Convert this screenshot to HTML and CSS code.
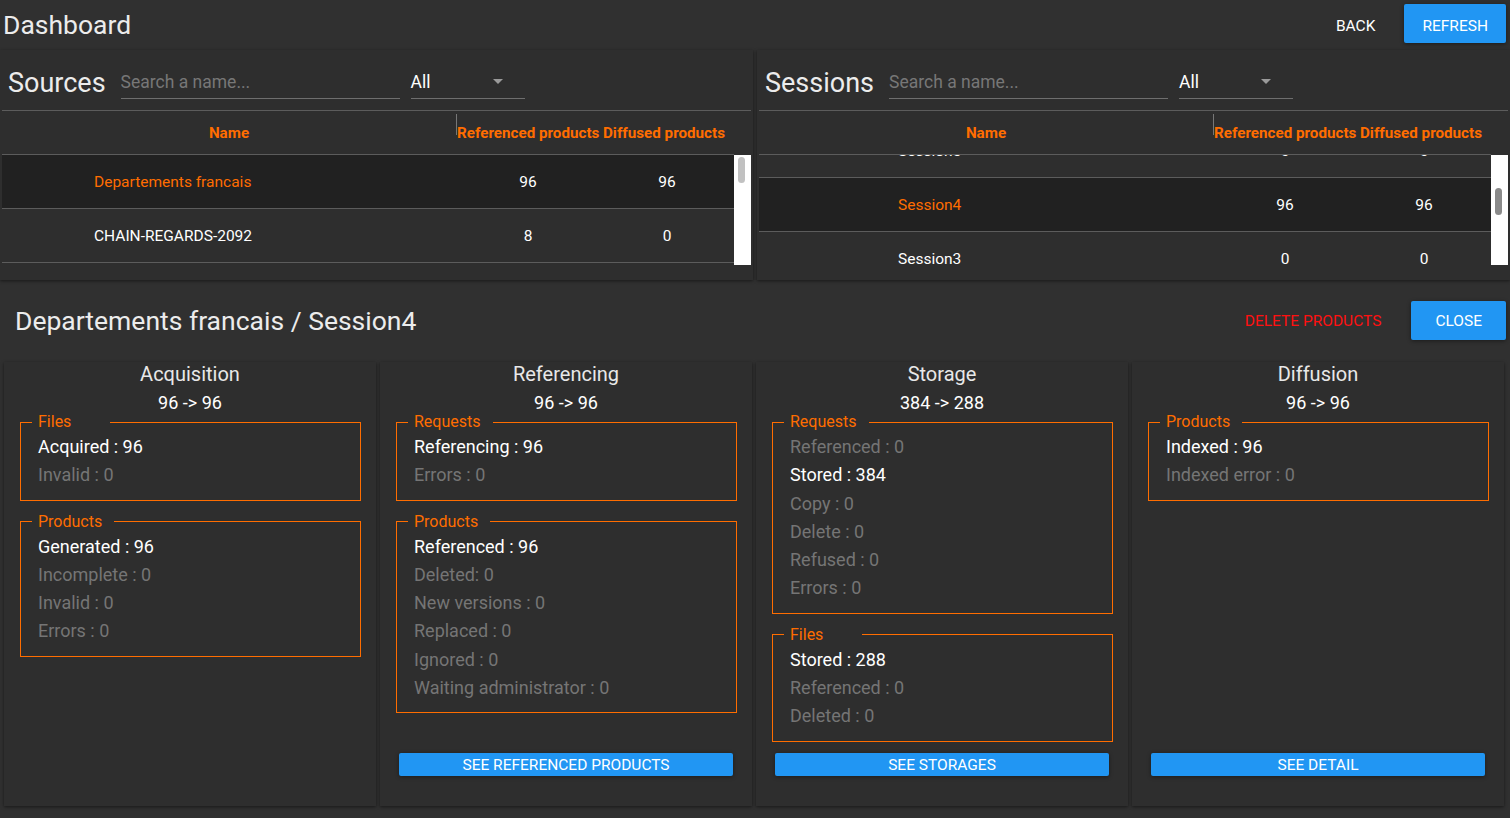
FILE: index.html
```html
<!DOCTYPE html>
<html lang="en">
<head>
<meta charset="utf-8">
<title>Dashboard</title>
<link rel="stylesheet" href="styles.css">
</head>
<body>
<header class="topbar">
  <h1 class="page-title">Dashboard</h1>
  <div class="actions">
    <button class="btn btn-text">Back</button>
    <button class="btn btn-primary btn-refresh">Refresh</button>
  </div>
</header>

<section class="lists">
  <div class="card list-card sources">
    <div class="list-head">
      <h2 class="list-title">Sources</h2>
      <input class="search" type="text" placeholder="Search a name...">
      <div class="select"><span>All</span><span class="caret"></span></div>
    </div>
    <div class="thead">
      <div class="th col-name">Name</div>
      <div class="th col-ref">Referenced products</div>
      <div class="th col-diff">Diffused products</div>
    </div>
    <div class="tbody-wrap">
      <div class="tbody">
        <div class="row selected"><div class="cell col-name">Departements francais</div><div class="cell col-ref">96</div><div class="cell col-diff">96</div></div>
        <div class="row"><div class="cell col-name">CHAIN-REGARDS-2092</div><div class="cell col-ref">8</div><div class="cell col-diff">0</div></div>
      </div>
      <div class="vscroll"><div class="thumb" style="margin-top:2px;height:26px"></div></div>
    </div>
  </div>

  <div class="card list-card sessions">
    <div class="list-head">
      <h2 class="list-title">Sessions</h2>
      <input class="search" type="text" placeholder="Search a name...">
      <div class="select"><span>All</span><span class="caret"></span></div>
    </div>
    <div class="thead">
      <div class="th col-name">Name</div>
      <div class="th col-ref">Referenced products</div>
      <div class="th col-diff">Diffused products</div>
    </div>
    <div class="tbody-wrap">
      <div class="tbody" id="sessions-body">
        <div class="row"><div class="cell col-name">Session7</div><div class="cell col-ref">0</div><div class="cell col-diff">0</div></div>
        <div class="row"><div class="cell col-name">Session6</div><div class="cell col-ref">0</div><div class="cell col-diff">0</div></div>
        <div class="row"><div class="cell col-name">Session5</div><div class="cell col-ref">0</div><div class="cell col-diff">0</div></div>
        <div class="row selected"><div class="cell col-name">Session4</div><div class="cell col-ref">96</div><div class="cell col-diff">96</div></div>
        <div class="row"><div class="cell col-name">Session3</div><div class="cell col-ref">0</div><div class="cell col-diff">0</div></div>
      </div>
      <div class="vscroll"><div class="thumb thumb-active" style="margin-top:33px;height:27px"></div></div>
    </div>
  </div>
</section>

<section class="detail-head">
  <h2 class="detail-title">Departements francais / Session4</h2>
  <div class="detail-actions">
    <button class="btn btn-danger">Delete products</button>
    <button class="btn btn-primary btn-close">Close</button>
  </div>
</section>

<section class="stats">
  <div class="card stat-card">
    <div class="stat-title">Acquisition</div>
    <div class="stat-total">96 -&gt; 96</div>
    <fieldset class="group">
      <legend>Files</legend>
      <div class="stat on">Acquired : 96</div>
      <div class="stat">Invalid : 0</div>
    </fieldset>
    <fieldset class="group">
      <legend>Products</legend>
      <div class="stat on">Generated : 96</div>
      <div class="stat">Incomplete : 0</div>
      <div class="stat">Invalid : 0</div>
      <div class="stat">Errors : 0</div>
    </fieldset>
  </div>

  <div class="card stat-card">
    <div class="stat-title">Referencing</div>
    <div class="stat-total">96 -&gt; 96</div>
    <fieldset class="group">
      <legend>Requests</legend>
      <div class="stat on">Referencing : 96</div>
      <div class="stat">Errors : 0</div>
    </fieldset>
    <fieldset class="group">
      <legend>Products</legend>
      <div class="stat on">Referenced : 96</div>
      <div class="stat">Deleted: 0</div>
      <div class="stat">New versions : 0</div>
      <div class="stat">Replaced : 0</div>
      <div class="stat">Ignored : 0</div>
      <div class="stat">Waiting administrator : 0</div>
    </fieldset>
    <button class="see">See referenced products</button>
  </div>

  <div class="card stat-card">
    <div class="stat-title">Storage</div>
    <div class="stat-total">384 -&gt; 288</div>
    <fieldset class="group">
      <legend>Requests</legend>
      <div class="stat">Referenced : 0</div>
      <div class="stat on">Stored : 384</div>
      <div class="stat">Copy : 0</div>
      <div class="stat">Delete : 0</div>
      <div class="stat">Refused : 0</div>
      <div class="stat">Errors : 0</div>
    </fieldset>
    <fieldset class="group">
      <legend>Files</legend>
      <div class="stat on">Stored : 288</div>
      <div class="stat">Referenced : 0</div>
      <div class="stat">Deleted : 0</div>
    </fieldset>
    <button class="see">See storages</button>
  </div>

  <div class="card stat-card">
    <div class="stat-title">Diffusion</div>
    <div class="stat-total">96 -&gt; 96</div>
    <fieldset class="group">
      <legend>Products</legend>
      <div class="stat on">Indexed : 96</div>
      <div class="stat">Indexed error : 0</div>
    </fieldset>
    <button class="see">See detail</button>
  </div>
</section>
<script src="script.js"></script>
</body>
</html>
```

FILE: styles.css
```css
* { box-sizing: border-box; }

html, body { margin: 0; padding: 0; }

body {
  width: 1510px;
  height: 818px;
  overflow: hidden;
  background: #303030;
  color: #fff;
  font-family: Roboto, "Noto Sans", "Liberation Sans", sans-serif;
}

/* ---------- top bar ---------- */
.topbar {
  height: 50px;
  display: flex;
  justify-content: space-between;
  align-items: flex-start;
  padding: 0 4px 0 3px;
}

.page-title {
  margin: 0;
  font-size: 26.5px;
  font-weight: 400;
  line-height: 50px;
  color: #ececec;
}

.actions {
  display: flex;
  gap: 12px;
  padding-top: 4px;
}

.btn {
  font-family: inherit;
  font-size: 15.5px;
  text-transform: uppercase;
  height: 39px;
  padding: 4px 16px 0;
  border: 0;
  border-radius: 2px;
  background: transparent;
  color: #fff;
}

.btn-text { padding: 4px 17px 0 16px; }

.btn-primary {
  background: #2196f3;
  box-shadow: 0 1px 4px rgba(0, 0, 0, 0.45);
}

.btn-refresh { padding: 4px 18px 0; }

.btn-danger { color: #ff1010; padding: 2px 17px 0 16px; }

.btn-close { padding: 2px 24px 0; }

/* ---------- lists ---------- */
.card {
  background: #2e2e2e;
  box-shadow: 0 1px 3px rgba(0, 0, 0, 0.5);
}

.lists {
  display: grid;
  grid-template-columns: 1fr 1fr;
  gap: 4px;
  height: 230px;
}

.list-card {
  padding: 0 2px 15px 2px;
}

.list-head {
  height: 61px;
  display: flex;
  align-items: center;
  padding: 6px 0 0 6px;
  border-bottom: 1px solid #5c5c5c;
}

.list-title {
  margin: 0;
  font-size: 27px;
  font-weight: 400;
  line-height: 30px;
  color: #ececec;
}

.search {
  margin-left: 15px;
  width: 279px;
  height: 31px;
  padding: 0 0 2px;
  border: 0;
  border-bottom: 1px solid #6e6e6e;
  background: transparent;
  color: #fff;
  font-family: inherit;
  font-size: 17.5px;
  outline: none;
}

.search::placeholder { color: #777; }

.select {
  margin-left: 11px;
  width: 114px;
  height: 31px;
  display: flex;
  align-items: center;
  justify-content: space-between;
  padding: 0 22px 2px 0;
  border-bottom: 1px solid #6e6e6e;
  font-size: 17.5px;
  color: #fff;
}

.caret {
  width: 0;
  height: 0;
  border-left: 5px solid transparent;
  border-right: 5px solid transparent;
  border-top: 5px solid #9a9a9a;
}

.thead {
  display: flex;
  height: 44px;
  margin-right: 17px;
  border-bottom: 1px solid #5c5c5c;
  align-items: center;
}

.th {
  font-size: 15.2px;
  font-weight: 700;
  color: #ff6d00;
  white-space: nowrap;
}

.th.col-name { text-align: center; }

.th.col-ref {
  position: relative;
  padding-left: 1px;
}

.th.col-ref::before {
  content: "";
  position: absolute;
  left: 0;
  top: -10px;
  height: 21px;
  border-left: 1px solid #777;
}

.col-name { width: 454px; flex: none; }
.col-ref { width: 144px; flex: none; }
.col-diff { flex: 1; }

.th.col-diff { padding-left: 3px; }

.tbody-wrap {
  display: flex;
  height: 110px;
}

.tbody {
  flex: 1;
  overflow: hidden;
}

.vscroll {
  width: 17px;
  flex: none;
  background: #fff;
  padding-left: 4px;
}

.thumb {
  width: 7px;
  border-radius: 4px;
  background: #c1c1c1;
}

.thumb-active { background: #8a8a8a; }

.row {
  display: flex;
  height: 54px;
  padding-top: 1px;
  align-items: center;
  border-bottom: 1px solid #5c5c5c;
  font-size: 15.5px;
  color: #fff;
}

.row.selected { background: #212121; }
.row.selected .col-name { color: #ff6d00; }

.cell { text-align: center; }
.cell.col-name { text-align: left; }
.sources .cell.col-name { padding-left: 92px; }
.sessions .cell.col-name { padding-left: 139px; }

/* ---------- detail header ---------- */
.detail-head {
  height: 80px;
  margin-top: 2px;
  display: flex;
  justify-content: space-between;
  align-items: center;
  padding: 0 4px 4px 15px;
}

.detail-title {
  margin: 0;
  font-size: 26.5px;
  font-weight: 400;
  color: #ececec;
}

.detail-actions {
  display: flex;
  gap: 13px;
  align-items: center;
}

/* ---------- stats ---------- */
.stats {
  display: grid;
  grid-template-columns: repeat(4, 1fr);
  gap: 4px;
  padding: 0 6px 0 4px;
  height: 444px;
}

.stat-card {
  display: flex;
  flex-direction: column;
  padding-bottom: 30px;
}

.stat-title {
  text-align: center;
  font-size: 20px;
  line-height: 24px;
  color: #e8e8e8;
}

.stat-total {
  text-align: center;
  font-size: 18px;
  line-height: 22px;
  margin-top: 6px;
  color: #fff;
}

.group {
  margin: -1px 15px 0 16px;
  padding: 2px 16px 10px 17px;
  border: 1px solid #ff6d00;
  min-width: 0;
}

.group + .group { margin-top: 12px; }

.group legend {
  margin-left: -6px;
  padding: 0 12px 0 6px;
  min-width: 78px;
  font-size: 16px;
  line-height: 18px;
  color: #ff6d00;
}

.stat {
  font-size: 18px;
  line-height: 28.3px;
  color: #757575;
  white-space: nowrap;
}

.stat.on { color: #fff; }

.see {
  margin: auto 19px 0 19px;
  height: 23px;
  padding: 1px 0 0;
  border: 0;
  border-radius: 2px;
  background: #2196f3;
  color: #fff;
  font-family: inherit;
  font-size: 15.5px;
  text-transform: uppercase;
  box-shadow: 0 1px 4px rgba(0, 0, 0, 0.4);
}
```

FILE: script.js
```js
document.getElementById('sessions-body').scrollTop = 139;
```
